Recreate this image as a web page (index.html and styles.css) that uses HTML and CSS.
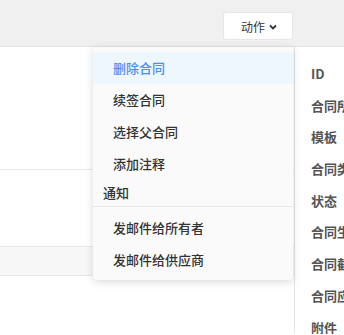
FILE: index.html
```html
<!DOCTYPE html>
<html lang="zh-CN">
<head>
  <meta charset="UTF-8">
  <meta name="viewport" content="width=device-width, initial-scale=1.0">
  <title>合同</title>
  <link rel="stylesheet" href="styles.css">
</head>
<body>
  <div class="topbar">
    <div class="action-wrap">
      <button class="action-button">动作
        <svg class="chevron" width="8" height="6" viewBox="0 0 8 6"><path d="M1 1.5 L4 4.5 L7 1.5" fill="none" stroke="#333" stroke-width="1.8"/></svg>
      </button>
      <div class="dropdown">
        <div class="menu-item active">删除合同</div>
        <div class="menu-item">续签合同</div>
        <div class="menu-item">选择父合同</div>
        <div class="menu-item">添加注释</div>
        <div class="menu-header">通知</div>
        <div class="menu-item">发邮件给所有者</div>
        <div class="menu-item">发邮件给供应商</div>
      </div>
    </div>
  </div>

  <div class="content">
    <div class="main">
      <div class="block block-top"></div>
      <div class="block block-mid"></div>
      <div class="row-band"></div>
    </div>
    <div class="side">
      <div class="field">ID</div>
      <div class="field">合同所有者</div>
      <div class="field">模板</div>
      <div class="field">合同类型</div>
      <div class="field">状态</div>
      <div class="field">合同生效日期</div>
      <div class="field">合同截止日期</div>
      <div class="field">合同应付金额</div>
      <div class="field">附件</div>
    </div>
  </div>
</body>
</html>
```

FILE: styles.css
```css
body {
  margin: 0;
  font-family: "Noto Sans CJK SC", "Noto Sans", sans-serif;
  font-size: 13px;
  color: #333333;
  background: #ffffff;
  overflow: hidden;
}

.topbar {
  height: 47px;
  background-color: #f0f0f0;
  border-bottom: 1px solid #e3e3e3;
  display: flex;
  justify-content: flex-end;
  align-items: flex-start;
  padding-right: 51px;
  box-sizing: border-box;
}

.action-wrap {
  position: relative;
  margin-top: 12px;
}

.action-button {
  width: 70px;
  height: 28px;
  background: #ffffff;
  border: 1px solid #e6e6e6;
  border-radius: 3px;
  font-family: inherit;
  font-size: 12px;
  color: #333333;
  display: flex;
  align-items: center;
  justify-content: center;
  gap: 4px;
  padding: 0 0 0 2px;
  cursor: pointer;
}

.chevron {
  display: block;
  margin-top: 1px;
}

.dropdown {
  position: absolute;
  top: 35px;
  right: 0;
  width: 200px;
  padding: 5px 0 4px;
  background-color: #fafafa;
  border-radius: 0 0 4px 4px;
  box-shadow: 0 2px 8px rgba(0, 0, 0, 0.15);
  z-index: 10;
}

.menu-item {
  height: 32px;
  line-height: 32px;
  padding-left: 20px;
  font-weight: 500;
  white-space: nowrap;
}

.menu-item.active {
  background-color: #eef6fe;
  color: #4a8ff0;
}

.menu-header {
  height: 26px;
  line-height: 26px;
  padding-left: 10px;
  font-weight: 500;
  border-bottom: 1px solid #e6e6e6;
  margin-bottom: 5px;
}

.content {
  display: flex;
  height: 287px;
}

.main {
  width: 294px;
}

.block-top {
  height: 122px;
  border-bottom: 1px solid #e8e8e8;
}

.block-mid {
  height: 76px;
}

.row-band {
  height: 28px;
  background-color: #f7f7f7;
  border-top: 1px solid #e8e8e8;
  border-bottom: 1px solid #e8e8e8;
}

.side {
  flex: 1;
  border-left: 1px solid #e6e6e6;
  padding: 11px 0 0 16px;
  overflow: hidden;
}

.field {
  height: 31.7px;
  line-height: 31.7px;
  font-weight: 700;
  color: #555555;
  white-space: nowrap;
}
```
